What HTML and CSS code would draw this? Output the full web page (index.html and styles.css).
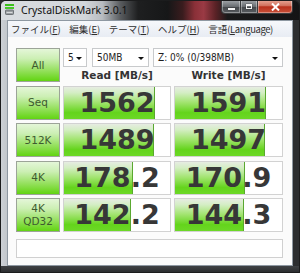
FILE: index.html
```html
<!DOCTYPE html>
<html>
<head>
<meta charset="utf-8">
<link rel="stylesheet" href="styles.css">
</head>
<body>
<div class="window">
  <div class="titlebar">
    <svg class="appicon" width="9" height="11" viewBox="0 0 9 11">
      <rect x="0" y="0" width="9" height="2" fill="#3cc01c"/>
      <rect x="0" y="3" width="9" height="2" fill="#46c828"/>
      <rect x="0.5" y="6" width="8" height="4.5" rx="0.8" fill="#9a9ea2" stroke="#5c6064" stroke-width="0.8"/>
      <rect x="1.5" y="8" width="6" height="1" fill="#d8dadc"/>
    </svg>
    <span class="title">CrystalDiskMark 3.0.1</span>
    <div class="caption">
      <div class="cbtn min"><span class="g-min"></span></div>
      <div class="cbtn max"><span class="g-max"></span></div>
      <div class="cbtn close">
        <svg width="9" height="8" viewBox="0 0 9 8"><path d="M1 0.5 L8 7.5 M8 0.5 L1 7.5" stroke="#fff" stroke-width="2"/></svg>
      </div>
    </div>
  </div>
  <div class="client">
    <div class="menubar">
      <span class="mi">ファイル(<u>F</u>)</span>
      <span class="mi">編集(<u>E</u>)</span>
      <span class="mi">テーマ(<u>T</u>)</span>
      <span class="mi">ヘルプ(<u>H</u>)</span>
      <span class="mi">言語<span class="lat">(<u>L</u>anguage)</span></span>
    </div>
    <div class="content">
      <div class="grid">
        <div class="btn">All</div>
        <div class="top">
          <div class="selects">
            <div class="sel s-count"><span>5</span><i class="arrow"></i></div>
            <div class="sel s-size"><span>50MB</span><i class="arrow"></i></div>
            <div class="sel s-drive"><span>Z: 0% (0/398MB)</span><i class="arrow"></i></div>
          </div>
          <div class="hdr">Read [MB/s]</div>
          <div class="hdr">Write [MB/s]</div>
        </div>

        <div class="btn">Seq</div>
        <div class="val"><div class="bar" style="width:91px"></div><span class="num">1562</span></div>
        <div class="val"><div class="bar" style="width:91px"></div><span class="num">1591</span></div>

        <div class="btn">512K</div>
        <div class="val"><div class="bar" style="width:90px"></div><span class="num">1489</span></div>
        <div class="val"><div class="bar" style="width:90px"></div><span class="num">1497</span></div>

        <div class="btn">4K</div>
        <div class="val"><div class="bar" style="width:69px"></div><span class="num">178.2</span></div>
        <div class="val"><div class="bar" style="width:70px"></div><span class="num">170.9</span></div>

        <div class="btn">4K<br>QD32</div>
        <div class="val"><div class="bar" style="width:67px"></div><span class="num">142.2</span></div>
        <div class="val"><div class="bar" style="width:69px"></div><span class="num">144.3</span></div>
      </div>
      <div class="comment"></div>
    </div>
  </div>
</div>
</body>
</html>
```
FILE: styles.css
```css
html, body {
  margin: 0;
  padding: 0;
  background: #2a2c2e;
}

.window {
  width: 300px;
  height: 273px;
  box-sizing: border-box;
  border: 1px solid #1b1c1d;
  border-radius: 6px 6px 0 0;
  overflow: hidden;
  display: flex;
  flex-direction: column;
  background:
    linear-gradient(to top, #2c2e30 0, #3e4144 6px, transparent 6px),
    linear-gradient(90deg, #cdd1d6 0, #c2c7cc 6px, #2c2e30 6px);
}

.titlebar {
  height: 19px;
  flex: none;
  display: flex;
  align-items: flex-start;
  background: linear-gradient(90deg,
    #dadde1 0%, #d2d6da 28%, #b8bcc0 34%, #5a5d60 40%, #1e1f20 46%,
    #161718 56%, #3a1c1e 61%, #8a3038 65%, #9a3a44 68%, #5a2226 72%,
    #1a1a1b 76%, #141415 100%);
}

.appicon {
  margin: 3px 0 0 4px;
  flex: none;
}

.title {
  margin: 2px 0 0 7px;
  font-family: "Noto Sans", sans-serif;
  font-size: 10.5px;
  line-height: 14px;
  color: #101010;
  white-space: nowrap;
}

.caption {
  margin-left: auto;
  margin-right: 6px;
  margin-top: -1px;
  display: flex;
}

.cbtn {
  height: 14px;
  box-sizing: border-box;
  border: 1px solid #3a3c3e;
  border-top: none;
  display: flex;
  align-items: center;
  justify-content: center;
  box-shadow: inset 0 0 0 1px rgba(255, 255, 255, 0.35);
}

.min {
  width: 20px;
  border-radius: 0 0 0 4px;
  background: linear-gradient(#a4a8ac, #6a6e72 50%, #44474a 51%, #585c60);
}

.max {
  width: 17px;
  border-left: none;
  background: linear-gradient(#a4a8ac, #6a6e72 50%, #44474a 51%, #585c60);
}

.close {
  width: 35px;
  border-left: none;
  border-radius: 0 0 4px 0;
  background: linear-gradient(#e8a898, #d0705c 45%, #b8301c 52%, #c85038);
}

.g-min {
  width: 7px;
  height: 2px;
  margin-top: 5px;
  background: #f4f4f4;
  box-shadow: 0 0 1px #222;
}

.g-max {
  width: 6px;
  height: 5px;
  box-sizing: border-box;
  border: 1px solid #f4f4f4;
  border-top-width: 2px;
  box-shadow: 0 0 1px #222;
}

.client {
  flex: 1;
  margin: 0 6px 6px;
  border: 1px solid #8e98a2;
  background: #fbfbfb;
  display: flex;
  flex-direction: column;
  min-height: 0;
}

.menubar {
  height: 16px;
  flex: none;
  display: flex;
  align-items: center;
  gap: 8.5px;
  padding-left: 3px;
  background: linear-gradient(#f6f8fb, #e8ecf3);
  font-family: "Noto Sans CJK JP", sans-serif;
  font-size: 9.5px;
  color: #2e2e2e;
  white-space: nowrap;
}

.mi u {
  text-decoration: underline;
  text-underline-offset: 1px;
}

.lat {
  letter-spacing: -0.4px;
}

.content {
  padding: 11px 9px 0 8px;
}

.grid {
  display: grid;
  grid-template-columns: 44px 108px 109px;
  grid-auto-rows: 34px;
  gap: 3.5px 3px;
}

.btn {
  box-sizing: border-box;
  border: 1px solid #9ca498;
  background: linear-gradient(#e4f6d8 0%, #ccefb4 30%, #94e05c 68%, #62d412 100%);
  display: flex;
  align-items: center;
  justify-content: center;
  text-align: center;
  font-family: "DejaVu Sans", sans-serif;
  font-size: 10.5px;
  line-height: 13px;
  color: #3e5a30;
}

.top {
  grid-column: 2 / 4;
  display: grid;
  grid-template-columns: 108px 109px;
  grid-template-rows: 19px 15px;
  column-gap: 3px;
}

.selects {
  grid-column: 1 / 3;
  display: flex;
  gap: 5px;
}

.sel {
  box-sizing: border-box;
  height: 19px;
  border: 1px solid #c8cacc;
  background: #fff;
  display: flex;
  align-items: center;
  justify-content: space-between;
  padding: 0 4px 0 4px;
  font-family: "DejaVu Sans Condensed", "DejaVu Sans", sans-serif;
  font-size: 10px;
  color: #1e1e1e;
}

.s-count { width: 24px; }
.s-size { width: 57px; }
.s-drive { width: 130px; margin-left: -1px; }

.arrow {
  width: 0;
  height: 0;
  border-left: 3px solid transparent;
  border-right: 3px solid transparent;
  border-top: 3px solid #111;
  margin-top: 1px;
}

.hdr {
  display: flex;
  align-items: center;
  justify-content: center;
  font-family: "DejaVu Sans", sans-serif;
  font-weight: bold;
  font-size: 10.5px;
  color: #333;
  white-space: nowrap;
}

.val {
  position: relative;
  box-sizing: border-box;
  border: 1px solid #d2d2d2;
  background: #fff;
  display: flex;
  align-items: center;
  justify-content: center;
  overflow: hidden;
}

.bar {
  position: absolute;
  left: 0;
  top: 0;
  bottom: 0;
  box-sizing: border-box;
  border-right: 1px solid #5aa830;
  background: linear-gradient(#e6ece2 0%, #d4eec4 18%, #a2e470 48%, #64d41c 80%, #6cd826 100%);
}

.num {
  position: relative;
  font-family: "DejaVu Sans", sans-serif;
  font-weight: bold;
  font-size: 27px;
  line-height: 30px;
  color: #373737;
  white-space: nowrap;
}

.comment {
  margin-top: 7px;
  width: 267px;
  height: 19px;
  box-sizing: border-box;
  border: 1px solid #d0d0d0;
  background: #fff;
}
```
